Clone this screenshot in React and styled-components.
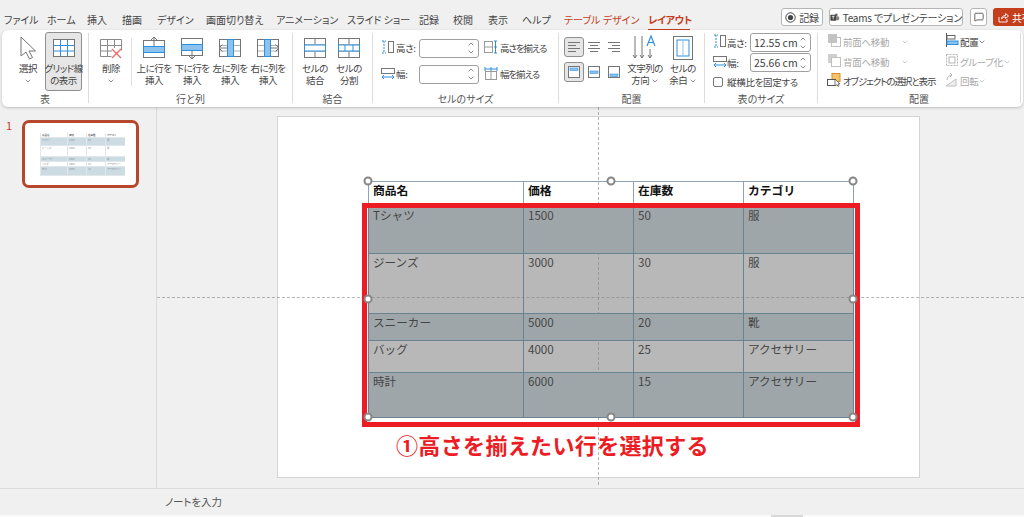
import React from "react";
import styled, { createGlobalStyle } from "styled-components";
import { ChevronDown, ChevronUp, MessageSquare } from "lucide-react";

const GlobalStyle = createGlobalStyle`
  html, body {
    margin: 0;
    padding: 0;
    background: #f0f0f0;
  }
  * {
    box-sizing: border-box;
  }
`;

const UI_FONT = `"Noto Sans CJK JP", "Noto Sans", sans-serif`;

const Window = styled.div`
  width: 1024px;
  height: 517px;
  overflow: hidden;
  display: flex;
  flex-direction: column;
  background: #f0f0f0;
  font-family: ${UI_FONT};
  font-feature-settings: "palt";
  color: #444;
`;

const TabBar = styled.div`
  height: 30px;
  flex: none;
  display: flex;
  align-items: center;
  padding-left: 4px;
`;

const Tab = styled.span`
  width: ${(p) => p.$w}px;
  font-size: 10px;
  line-height: 14px;
  padding-top: 9px;
  white-space: nowrap;
  color: ${(p) => (p.$accent ? "#c43e1c" : "#444")};
  font-weight: ${(p) => (p.$active ? 700 : 400)};
  letter-spacing: ${(p) => (p.$active ? "-0.3px" : "0")};
  position: relative;
  &::after {
    content: "";
    display: ${(p) => (p.$active ? "block" : "none")};
    position: absolute;
    left: 0;
    width: 42px;
    bottom: -3px;
    height: 1px;
    background: #c43e1c;
  }
`;

const TopActions = styled.div`
  position: absolute;
  left: 781px;
  top: 8px;
  display: flex;
  gap: 6px;
  width: 243px;
  overflow: hidden;
`;

const TopButton = styled.div`
  flex: none;
  height: 18px;
  width: ${(p) => p.$w}px;
  margin-left: ${(p) => p.$ml || 0}px;
  display: flex;
  align-items: center;
  justify-content: center;
  gap: 3px;
  border: 1px solid #b5b5b5;
  border-radius: 3px;
  background: #fff;
  font-size: 10px;
  letter-spacing: -0.2px;
  color: #444;
  white-space: nowrap;
`;

const ShareButton = styled(TopButton)`
  border: none;
  background: #c43e1c;
  color: #fff;
  justify-content: flex-start;
  padding-left: 5px;
  border-radius: 3px 0 0 3px;
`;

const Ribbon = styled.div`
  height: 77px;
  flex: none;
  margin: 0 1px 0 2px;
  display: flex;
  background: #fff;
  border-radius: 6px;
  box-shadow: 0 1px 3px rgba(0, 0, 0, 0.22);
  position: relative;
  z-index: 2;
`;

const Group = styled.div`
  width: ${(p) => p.$w}px;
  flex: none;
  display: flex;
  flex-direction: column;
`;

const GroupBody = styled.div`
  height: 61px;
  display: flex;
  padding-left: ${(p) => p.$pl || 0}px;
`;

const GroupLabel = styled.div`
  height: 16px;
  text-align: center;
  font-size: 10px;
  line-height: 15px;
  color: #555;
`;

const Divider = styled.div`
  width: 1px;
  flex: none;
  margin: 3px 0 4px;
  background: #dcdcdc;
`;

const InnerSep = styled.div`
  width: 1px;
  flex: none;
  height: 48px;
  margin: 8px 3px 0 0;
  background: #e2e2e2;
`;

const BigButton = styled.div`
  width: ${(p) => p.$w || 38}px;
  height: 59px;
  margin-top: 2px;
  flex: none;
  display: flex;
  flex-direction: column;
  align-items: center;
  border: 1px solid ${(p) => (p.$on ? "#8f8f8f" : "transparent")};
  border-radius: 3px;
  background: ${(p) => (p.$on ? "#e6e6e6" : "transparent")};
`;

const BigIcon = styled.div`
  height: 29px;
  display: flex;
  align-items: center;
  justify-content: center;
`;

const BigText = styled.div`
  font-size: 9.5px;
  letter-spacing: -0.5px;
  line-height: 12px;
  text-align: center;
  white-space: nowrap;
  color: #444;
`;

const Caret = styled(ChevronDown)`
  display: inline-block;
  vertical-align: middle;
  color: ${(p) => p.color || "#555"};
`;

const SizeColumn = styled.div`
  width: ${(p) => (p.$w ? `${p.$w}px` : "auto")};
  flex: none;
  display: flex;
  flex-direction: column;
  gap: ${(p) => p.$gap || 0}px;
  padding-top: ${(p) => p.$pt || 0}px;
`;

const SizeRow = styled.div`
  display: flex;
  align-items: center;
  height: ${(p) => p.$h || 20}px;
  font-size: 9.5px;
  letter-spacing: ${(p) => (p.$tight ? "-1.1px" : "-0.3px")};
  color: ${(p) => (p.$off ? "#a8a8a8" : "#444")};
  white-space: nowrap;
`;

const FieldLabel = styled.span`
  width: ${(p) => p.$w}px;
  flex: none;
  letter-spacing: -0.3px;
`;

const SpinBox = styled.div`
  width: ${(p) => p.$w}px;
  height: ${(p) => p.$h || 19}px;
  flex: none;
  display: flex;
  align-items: center;
  justify-content: space-between;
  padding: 0 3px;
  border: 1px solid #a0a0a0;
  border-radius: 3px;
  font-size: 10.5px;
  letter-spacing: 0;
  color: #444;
`;

const SpinArrows = styled.div`
  display: flex;
  flex-direction: column;
  line-height: 0;
  color: #555;
`;

const AlignGrid = styled.div`
  display: grid;
  grid-template-columns: repeat(3, 20px);
  grid-auto-rows: 20px;
  row-gap: 5px;
  padding-top: 7px;
`;

const AlignCell = styled.div`
  display: flex;
  align-items: center;
  justify-content: center;
  border: 1px solid ${(p) => (p.$on ? "#8f8f8f" : "transparent")};
  border-radius: 3px;
  background: ${(p) => (p.$on ? "#e6e6e6" : "transparent")};
`;

const Check = styled.span`
  width: 10px;
  height: 10px;
  margin-right: 4px;
  flex: none;
  border: 1px solid #777;
  border-radius: 2px;
  background: #fff;
`;

const Main = styled.div`
  flex: 1;
  display: flex;
  position: relative;
  min-height: 0;
`;

const Sidebar = styled.aside`
  width: 157px;
  flex: none;
  border-right: 1px solid #dcdcdc;
  display: flex;
  align-items: flex-start;
  padding: 13px 0 0 6px;
`;

const SlideNumber = styled.span`
  width: 16px;
  font-size: 11px;
  line-height: 11px;
  color: #c43e1c;
`;

const Thumb = styled.div`
  width: 117px;
  height: 68px;
  border: 3px solid #b7472a;
  border-radius: 7px;
  background: #fff;
  padding: 10px 0 0 15px;
`;

const MiniTable = styled.div`
  width: 85px;
  display: grid;
  grid-template-columns: 27px 19px 19px 20px;
`;

const MiniCell = styled.div`
  height: ${(p) => p.$h}px;
  padding: 1px 0 0 1px;
  font-size: 2.5px;
  line-height: 3px;
  white-space: nowrap;
  overflow: hidden;
  color: ${(p) => (p.$head ? "#333" : "#8a9298")};
  background: ${(p) => (p.$shade ? "#cddce3" : "#fff")};
  border-left: 1px solid #dfe7eb;
  border-bottom: 1px solid #dfe7eb;
`;

const Editor = styled.div`
  flex: 1;
  padding: 10px 0 0 121px;
`;

const Slide = styled.div`
  width: 641px;
  height: 360px;
  background: #fff;
  box-shadow: 0 0 0 1px #d4d4d4;
  padding: 64px 0 0 90px;
`;

const TableFrame = styled.div`
  width: 485px;
  height: 236px;
  position: relative;
  z-index: 1;
  font-feature-settings: normal;
`;

const DataTable = styled.table`
  width: 485px;
  height: 236px;
  table-layout: fixed;
  border-collapse: collapse;
  font-family: ${UI_FONT};
  border: 1px solid #7f909c;
`;

const Row = styled.tr`
  height: ${(p) => p.$h}px;
  background: ${(p) => p.$bg};
`;

const Cell = styled.td`
  padding: 0 0 0 4px;
  vertical-align: top;
  border: 1px solid #6a8391;
  font-size: 11.6px;
  line-height: 17px;
  color: #454545;
  white-space: nowrap;
`;

const HeadCell = styled(Cell)`
  border-color: #8fa4b0;
  font-weight: 700;
  font-size: 11.8px;
  line-height: 16px;
  color: #111;
  text-align: left;
`;

const RedBox = styled.div`
  position: absolute;
  left: -6px;
  right: -7px;
  top: 22px;
  bottom: -10px;
  border: 5px solid #ed1c24;
  pointer-events: none;
`;

const Handle = styled.span`
  position: absolute;
  left: ${(p) => p.$x}%;
  top: ${(p) => p.$y}%;
  width: 9px;
  height: 9px;
  transform: translate(-50%, -50%);
  border-radius: 50%;
  border: 2px solid #868686;
  background: #fff;
`;

const Annotation = styled.div`
  margin: 12px 0 0 28px;
  font-size: 22px;
  line-height: 30px;
  font-weight: 700;
  letter-spacing: 0.35px;
  white-space: nowrap;
  color: #ed1c24;
  font-feature-settings: normal;
`;

const VGuide = styled.div`
  position: absolute;
  left: 598px;
  top: 0;
  bottom: 3px;
  border-left: 1px dashed rgba(120, 120, 120, 0.55);
`;

const HGuide = styled.div`
  position: absolute;
  left: 157px;
  right: 0;
  top: 190px;
  border-top: 1px dashed rgba(120, 120, 120, 0.55);
`;

const Notes = styled.div`
  height: 27px;
  flex: none;
  border-top: 1px solid #dcdcdc;
  padding: 6px 0 0 165px;
  font-size: 10.5px;
  letter-spacing: -0.1px;
  line-height: 14px;
  color: #555;
`;

const Footer = styled.div`
  height: 2px;
  flex: none;
  background: #fafafa;
  padding-left: 771px;
`;

const ScrollThumb = styled.div`
  width: 32px;
  height: 2px;
  background: #d8d8d8;
`;

const BLUE = "#2f8fdc";
const SOFT = "#8cc3ee";
const GRAY = "#757575";

const Svg = ({ children, s = 24 }) => (
  <svg width={s} height={s} viewBox={`0 0 ${s} ${s}`} fill="none">
    {children}
  </svg>
);

const CursorIcon = () => (
  <Svg>
    <path d="M5 1v19l5-4 3.500 7 3-1.500-3.500-6.500h6.500z" fill="#fff" stroke={GRAY} />
  </Svg>
);

const GridIcon = () => (
  <Svg>
    <rect x="1.5" y="3.5" width="21" height="17" fill="#fff" stroke={GRAY} />
    <path d="M2 9.500h20M2 15h20M8.500 4v16M15.500 4v16" stroke={BLUE} />
  </Svg>
);

const DeleteIcon = () => (
  <Svg>
    <path d="M1.500 3.500h21v11M1.500 3.500v17h11M2 9.500h20M2 15h11M8.500 4v16M15.500 4v8" stroke="#8a8a8a" />
    <path d="M13 13l9 9M22 13l-9 9" stroke="#ef6a6a" strokeWidth="1.4" />
  </Svg>
);

const InsertRowIcon = ({ below }) => (
  <Svg>
    <rect x="1.5" y={below ? 2.5 : 4.5} width="21" height="17" stroke={GRAY} />
    <rect x="1.5" y={below ? 8.5 : 10.5} width="21" height="6" fill={SOFT} stroke={BLUE} />
    {below ? (
      <path d="M12 14v9M8.500 19.500l3.500 3.500 3.500-3.500" stroke={GRAY} />
    ) : (
      <path d="M12 10V1M8.500 4.500L12 1l3.500 3.500" stroke={GRAY} />
    )}
  </Svg>
);

const InsertColIcon = ({ right }) => (
  <Svg>
    <rect x="1.5" y="3.5" width="21" height="17" stroke={GRAY} />
    <path d="M2 9.500h20M2 15h20" stroke="#b0b0b0" />
    <rect x={right ? 8.5 : 9.5} y="3.5" width="6" height="17" fill={SOFT} stroke={BLUE} />
    {right ? (
      <path d="M14 12h9M19.500 8.500L23 12l-3.500 3.500" stroke={GRAY} />
    ) : (
      <path d="M10 12H1M4.500 8.500L1 12l3.500 3.500" stroke={GRAY} />
    )}
  </Svg>
);

const MergeIcon = () => (
  <Svg>
    <rect x="1.5" y="2.5" width="21" height="19" fill="#fff" stroke={GRAY} />
    <path d="M2 9h20M2 15h20M12 3v5M12 16v5" stroke={GRAY} />
    <rect x="1.5" y="9" width="21" height="6" fill="#fff" stroke={BLUE} />
  </Svg>
);

const SplitIcon = () => (
  <Svg>
    <rect x="1.5" y="2.5" width="21" height="19" fill="#fff" stroke={GRAY} />
    <path d="M2 9h20M2 15h20M12 3v5M12 16v5" stroke={GRAY} />
    <rect x="1.5" y="9" width="21" height="6" fill="#fff" stroke={BLUE} />
    <path d="M8 9v6M16 9v6" stroke={BLUE} />
  </Svg>
);

const HeightIcon = () => (
  <Svg s={14}>
    <path d="M3 1v12M1 1h4M1 13h4" stroke={BLUE} strokeDasharray="2 1" />
    <rect x="7.5" y="1.5" width="5" height="11" stroke={GRAY} />
  </Svg>
);

const WidthIcon = () => (
  <Svg s={14}>
    <rect x="0.5" y="2.5" width="13" height="5" stroke={GRAY} />
    <path d="M1 11h12M3 9l-2 2 2 2M11 9l2 2-2 2" stroke={BLUE} />
  </Svg>
);

const EqualHeightIcon = () => (
  <Svg s={14}>
    <rect x="0.5" y="1.5" width="8" height="11" stroke="#999" />
    <path d="M1 7h8" stroke="#999" />
    <path d="M11.500 1v12M10 1h3M10 13h3M10 7h3" stroke={BLUE} />
  </Svg>
);

const EqualWidthIcon = () => (
  <Svg s={14}>
    <rect x="1.5" y="5.5" width="11" height="8" stroke="#999" />
    <path d="M7 6v7" stroke="#999" />
    <path d="M1 3h12M1 1v4M7 1v4M13 1v4" stroke={BLUE} />
  </Svg>
);

const AlignIcon = ({ mode }) => {
  const widths = [12, 8, 12, 8];
  return (
    <Svg s={14}>
      {widths.map((w, i) => {
        const x = mode === "left" ? 1 : mode === "center" ? (14 - w) / 2 : 13 - w;
        return <path key={i} d={`M${x} ${2.5 + i * 3}h${w}`} stroke={GRAY} />;
      })}
    </Svg>
  );
};

const VAlignIcon = ({ pos }) => {
  const y = pos === "top" ? 3 : pos === "middle" ? 6 : 9;
  return (
    <Svg s={14}>
      <rect x="1.5" y="1.5" width="11" height="11" fill="#fff" stroke={GRAY} />
      <rect x="3" y={y} width="8" height="2.5" fill={SOFT} stroke={BLUE} strokeWidth="0.6" />
    </Svg>
  );
};

const TextDirIcon = () => (
  <Svg s={26}>
    <path d="M3 1v22M1 20l2 3 2-3M10 1v22M8 20l2 3 2-3M18 14v9M16 20l2 3 2-3" stroke={GRAY} />
    <path d="M15 11l4-10 4 10M16.500 7.500h5" stroke={BLUE} strokeWidth="1.2" />
  </Svg>
);

const MarginIcon = () => (
  <Svg s={26}>
    <rect x="3.5" y="1.5" width="19" height="23" fill="#fff" stroke={GRAY} />
    <rect x="7" y="5" width="12" height="16" stroke={BLUE} />
    <path d="M13 5v16" stroke={SOFT} />
  </Svg>
);

const LayerIcon = ({ back }) => (
  <Svg s={14}>
    <rect x="1" y="1" width="9" height="9" fill={back ? "#d0d0d0" : "#c4c4c4"} />
    <rect x="4.5" y="4.5" width="9" height="9" fill={back ? "#fff" : "none"} stroke="#c0c0c0" />
  </Svg>
);

const SelectionIcon = () => (
  <Svg s={14}>
    <rect x="5" y="0.5" width="8" height="8" fill="#f6c26a" stroke="#d98a2b" />
    <rect x="0.5" y="6.5" width="8" height="6" fill="#fff" stroke="#555" />
    <path d="M8 6v7l2-1.500 1 2 1-.6-1-2h2z" fill="#fff" stroke="#444" strokeWidth="0.7" />
  </Svg>
);

const ArrangeIcon = () => (
  <Svg s={14}>
    <path d="M1.500 0v14" stroke="#555" />
    <rect x="2" y="2.5" width="8" height="3.5" fill="#fff" stroke="#666" />
    <rect x="2" y="8" width="11" height="3.5" fill={SOFT} stroke={BLUE} />
  </Svg>
);

const GroupIcon = () => (
  <Svg s={14}>
    <rect x="1.5" y="1.5" width="11" height="11" stroke="#b5b5b5" strokeDasharray="2 1" />
    <rect x="4" y="4" width="6" height="6" stroke="#b5b5b5" />
  </Svg>
);

const RotateIcon = () => (
  <Svg s={14}>
    <path d="M1 13l10-7v7z" stroke="#c0c0c0" fill="#eee" />
    <path d="M2 7c0-3 2-5 5-5M5 0l2 2-2 2" stroke="#b5b5b5" />
  </Svg>
);

const RecordDot = () => (
  <svg width="11" height="11" viewBox="0 0 11 11" fill="none">
    <circle cx="5.5" cy="5.5" r="4.7" stroke="#444" />
    <circle cx="5.5" cy="5.5" r="2.6" fill="#444" />
  </svg>
);

const TeamsMark = () => (
  <svg width="12" height="11" viewBox="0 0 12 11" fill="none">
    <circle cx="8" cy="2" r="1.6" fill="#666" />
    <rect x="6" y="4" width="5.5" height="5" rx="1.5" fill="#888" />
    <rect x="0.5" y="2" width="7" height="7.5" rx="0.8" fill="#444" />
    <path d="M2.300 4h3.400M4 4v3.800" stroke="#fff" />
  </svg>
);

const ShareMark = () => (
  <svg width="11" height="11" viewBox="0 0 11 11" fill="none">
    <path d="M1 5v5h8V7M3.500 7c0-2 1.500-3.500 4-3.500V1.500L10.500 4 7.500 6.500V5C5.500 5 4.500 5.600 3.500 7z" stroke="#fff" strokeWidth="0.9" />
  </svg>
);

const tabs = [
  ["ファイル", 43],
  ["ホーム", 40],
  ["挿入", 35],
  ["描画", 35],
  ["デザイン", 49],
  ["画面切り替え", 70],
  ["アニメーション", 71],
  ["スライド ショー", 72],
  ["記録", 34],
  ["校閲", 35],
  ["表示", 34],
  ["ヘルプ", 42],
];

const columns = ["商品名", "価格", "在庫数", "カテゴリ"];

const rows = [
  { cells: ["Tシャツ", "1500", "50", "服"], h: 47, bg: "#9fa6a9", mini: 8 },
  { cells: ["ジーンズ", "3000", "30", "服"], h: 60, bg: "rgba(130, 130, 130, 0.568)", mini: 11 },
  { cells: ["スニーカー", "5000", "20", "靴"], h: 27, bg: "#9fa6a9", mini: 5 },
  { cells: ["バッグ", "4000", "25", "アクセサリー"], h: 32, bg: "rgba(130, 130, 130, 0.568)", mini: 5 },
  { cells: ["時計", "6000", "15", "アクセサリー"], h: 45, bg: "#9fa6a9", mini: 9 },
];

const handles = [
  [0, 0],
  [50, 0],
  [100, 0],
  [0, 50],
  [100, 50],
  [0, 100],
  [50, 100],
  [100, 100],
];

const Spin = ({ w, h, value }) => (
  <SpinBox $w={w} $h={h}>
    <span>{value}</span>
    <SpinArrows>
      <ChevronUp size={8} />
      <ChevronDown size={8} />
    </SpinArrows>
  </SpinBox>
);

const Big = ({ icon, w, on, children }) => (
  <BigButton $w={w} $on={on}>
    <BigIcon>{icon}</BigIcon>
    <BigText>{children}</BigText>
  </BigButton>
);

const Thumbnail = () => (
  <Thumb>
    <MiniTable>
      {columns.map((c) => (
        <MiniCell key={c} $h={5} $head>
          {c}
        </MiniCell>
      ))}
      {rows.map((r, i) =>
        r.cells.map((c, j) => (
          <MiniCell key={`${i}-${j}`} $h={r.mini} $shade={i % 2 === 0}>
            {c}
          </MiniCell>
        ))
      )}
    </MiniTable>
  </Thumb>
);

const App = () => {
  return (
    <Window>
      <GlobalStyle />
      <TabBar>
        {tabs.map(([name, w]) => (
          <Tab key={name} $w={w}>
            {name}
          </Tab>
        ))}
        <Tab $w={84} $accent>
          テーブル デザイン
        </Tab>
        <Tab $w={50} $accent $active>
          レイアウト
        </Tab>
      </TabBar>
      <TopActions>
        <TopButton $w={42}>
          <RecordDot />
          記録
        </TopButton>
        <TopButton $w={134}>
          <TeamsMark />
          Teams でプレゼンテーション
        </TopButton>
        <TopButton $w={17} $ml={1}>
          <MessageSquare size={10} />
        </TopButton>
        <ShareButton $w={40}>
          <ShareMark />
          共有
        </ShareButton>
      </TopActions>

      <Ribbon>
        <Group $w={86}>
          <GroupBody $pl={9}>
            <Big w={34} icon={<CursorIcon />}>
              選択
              <br />
              <Caret size={8} />
            </Big>
            <Big w={37} on icon={<GridIcon />}>
              グリッド線
              <br />
              の表示
            </Big>
          </GroupBody>
          <GroupLabel>表</GroupLabel>
        </Group>
        <Divider />
        <Group $w={203}>
          <GroupBody $pl={2}>
            <Big w={40} icon={<DeleteIcon />}>
              削除
              <br />
              <Caret size={8} />
            </Big>
            <InnerSep />
            <Big icon={<InsertRowIcon />}>
              上に行を
              <br />
              挿入
            </Big>
            <Big icon={<InsertRowIcon below />}>
              下に行を
              <br />
              挿入
            </Big>
            <Big icon={<InsertColIcon />}>
              左に列を
              <br />
              挿入
            </Big>
            <Big icon={<InsertColIcon right />}>
              右に列を
              <br />
              挿入
            </Big>
          </GroupBody>
          <GroupLabel>行と列</GroupLabel>
        </Group>
        <Divider />
        <Group $w={79}>
          <GroupBody $pl={5}>
            <Big w={34} icon={<MergeIcon />}>
              セルの
              <br />
              結合
            </Big>
            <Big w={34} icon={<SplitIcon />}>
              セルの
              <br />
              分割
            </Big>
          </GroupBody>
          <GroupLabel>結合</GroupLabel>
        </Group>
        <Divider />
        <Group $w={185}>
          <GroupBody $pl={8}>
            <SizeColumn $pt={8} $gap={6}>
              <SizeRow $tight>
                <FieldLabel $w={15}>
                  <HeightIcon />
                </FieldLabel>
                <FieldLabel $w={23}>高さ:</FieldLabel>
                <Spin w={60} />
                <FieldLabel $w={5} />
                <FieldLabel $w={16}>
                  <EqualHeightIcon />
                </FieldLabel>
                高さを揃える
              </SizeRow>
              <SizeRow $tight>
                <FieldLabel $w={15}>
                  <WidthIcon />
                </FieldLabel>
                <FieldLabel $w={23}>幅:</FieldLabel>
                <Spin w={60} />
                <FieldLabel $w={5} />
                <FieldLabel $w={16}>
                  <EqualWidthIcon />
                </FieldLabel>
                幅を揃える
              </SizeRow>
            </SizeColumn>
          </GroupBody>
          <GroupLabel>セルのサイズ</GroupLabel>
        </Group>
        <Divider />
        <Group $w={145}>
          <GroupBody $pl={5}>
            <AlignGrid>
              <AlignCell $on>
                <AlignIcon mode="left" />
              </AlignCell>
              <AlignCell>
                <AlignIcon mode="center" />
              </AlignCell>
              <AlignCell>
                <AlignIcon mode="right" />
              </AlignCell>
              <AlignCell $on>
                <VAlignIcon pos="top" />
              </AlignCell>
              <AlignCell>
                <VAlignIcon pos="middle" />
              </AlignCell>
              <AlignCell>
                <VAlignIcon pos="bottom" />
              </AlignCell>
            </AlignGrid>
            <Big w={42} icon={<TextDirIcon />}>
              文字列の
              <br />
              方向 <Caret size={8} />
            </Big>
            <Big w={34} icon={<MarginIcon />}>
              セルの
              <br />
              余白 <Caret size={8} />
            </Big>
          </GroupBody>
          <GroupLabel>配置</GroupLabel>
        </Group>
        <Divider />
        <Group $w={112}>
          <GroupBody $pl={8}>
            <SizeColumn $pt={3} $gap={1}>
              <SizeRow>
                <FieldLabel $w={14}>
                  <HeightIcon />
                </FieldLabel>
                <FieldLabel $w={23}>高さ:</FieldLabel>
                <Spin w={61} value="12.55 cm" />
              </SizeRow>
              <SizeRow>
                <FieldLabel $w={14}>
                  <WidthIcon />
                </FieldLabel>
                <FieldLabel $w={23}>幅:</FieldLabel>
                <Spin w={61} value="25.66 cm" />
              </SizeRow>
              <SizeRow $h={21}>
                <Check />
                縦横比を固定する
              </SizeRow>
            </SizeColumn>
          </GroupBody>
          <GroupLabel>表のサイズ</GroupLabel>
        </Group>
        <Divider />
        <Group $w={202}>
          <GroupBody $pl={9}>
            <SizeColumn $pt={2} $w={118}>
              <SizeRow $off>
                <FieldLabel $w={16}>
                  <LayerIcon />
                </FieldLabel>
                前面へ移動
                <FieldLabel $w={12} />
                <Caret size={8} color="#b5b5b5" />
              </SizeRow>
              <SizeRow $off>
                <FieldLabel $w={16}>
                  <LayerIcon back />
                </FieldLabel>
                背面へ移動
                <FieldLabel $w={12} />
                <Caret size={8} color="#b5b5b5" />
              </SizeRow>
              <SizeRow $tight>
                <FieldLabel $w={16}>
                  <SelectionIcon />
                </FieldLabel>
                オブジェクトの選択と表示
              </SizeRow>
            </SizeColumn>
            <SizeColumn $pt={2}>
              <SizeRow>
                <FieldLabel $w={15}>
                  <ArrangeIcon />
                </FieldLabel>
                配置 <Caret size={8} />
              </SizeRow>
              <SizeRow $off>
                <FieldLabel $w={15}>
                  <GroupIcon />
                </FieldLabel>
                グループ化 <Caret size={8} color="#b5b5b5" />
              </SizeRow>
              <SizeRow $off>
                <FieldLabel $w={15}>
                  <RotateIcon />
                </FieldLabel>
                回転 <Caret size={8} color="#b5b5b5" />
              </SizeRow>
            </SizeColumn>
          </GroupBody>
          <GroupLabel>配置</GroupLabel>
        </Group>
        <Divider />
      </Ribbon>

      <Main>
        <Sidebar>
          <SlideNumber>1</SlideNumber>
          <Thumbnail />
        </Sidebar>
        <Editor>
          <Slide>
            <TableFrame>
              <DataTable>
                <colgroup>
                  <col width="155" />
                  <col width="110" />
                  <col width="110" />
                  <col width="110" />
                </colgroup>
                <tbody>
                  <Row $h={25}>
                    {columns.map((c) => (
                      <HeadCell key={c} as="th">
                        {c}
                      </HeadCell>
                    ))}
                  </Row>
                  {rows.map((r) => (
                    <Row key={r.cells[0]} $h={r.h} $bg={r.bg}>
                      {r.cells.map((c, i) => (
                        <Cell key={i}>{c}</Cell>
                      ))}
                    </Row>
                  ))}
                </tbody>
              </DataTable>
              <RedBox />
              {handles.map(([x, y]) => (
                <Handle key={`${x}-${y}`} $x={x} $y={y} />
              ))}
            </TableFrame>
            <Annotation>①高さを揃えたい行を選択する</Annotation>
          </Slide>
        </Editor>
        <VGuide />
        <HGuide />
      </Main>

      <Notes>ノートを入力</Notes>
      <Footer>
        <ScrollThumb />
      </Footer>
    </Window>
  );
};

export default App;
